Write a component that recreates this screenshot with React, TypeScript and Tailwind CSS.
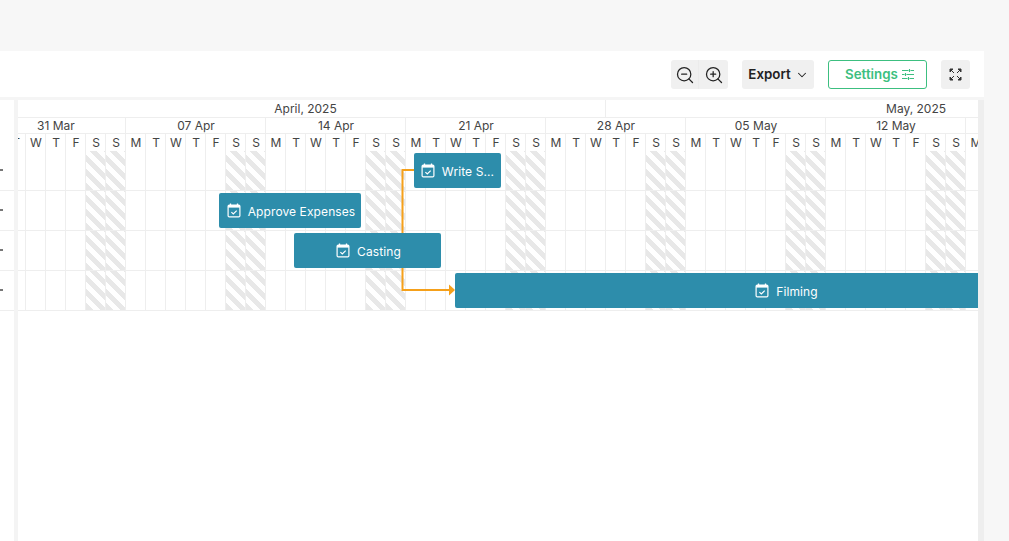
import React from "react";
import { ChevronDown, ZoomIn, ZoomOut } from "lucide-react";

const weeks = ["31 Mar", "07 Apr", "14 Apr", "21 Apr", "28 Apr", "05 May", "12 May", "19 May"];
const dayNames = ["M", "T", "W", "T", "F", "S", "S"];
const hatch =
  "bg-[repeating-linear-gradient(45deg,#e8e8e8_0px,#e8e8e8_5px,#ffffff_5px,#ffffff_10px)]";

function CalendarIcon() {
  return (
    <svg width="14" height="15" viewBox="0 0 14 15" fill="none" className="shrink-0">
      <path d="M3.500 0.500v2M10.500 0.500v2" stroke="white" strokeWidth="1.3" />
      <rect x="1.100" y="2" width="11.800" height="11.900" rx="1.200" stroke="white" strokeWidth="1.200" />
      <rect x="1.100" y="2" width="11.800" height="2.600" fill="white" />
      <path d="M4.400 9.100l1.900 1.900 3.400-3.400" stroke="white" strokeWidth="1.200" />
    </svg>
  );
}

function Bar({ className, label }: { className: string; label: string }) {
  return (
    <div
      className={`absolute flex h-[35px] items-center justify-center gap-[7px] rounded-[2px] bg-[#2d8dab] text-[12px] text-white ${className}`}
    >
      <CalendarIcon />
      <span className="pt-[2px] tracking-[0.1px]">{label}</span>
    </div>
  );
}

function Row() {
  return (
    <div className="flex h-10 border-b border-[#eeeeee]">
      {weeks.map((w) =>
        dayNames.map((d, i) => (
          <div
            key={w + i}
            className={`h-full w-5 shrink-0 border-r border-[#eeeeee] ${i >= 5 ? hatch : ""}`}
          />
        ))
      )}
    </div>
  );
}

export default function App() {
  return (
    <div className="h-[541px] w-[1009px] overflow-hidden bg-[#f7f7f7] pr-[25px] pt-[51px] font-['Inter','Liberation_Sans',sans-serif] text-[#444444]">
      <div className="flex h-[490px] flex-col bg-white">
        <div className="flex h-[46px] shrink-0 items-start justify-end gap-[14px] pr-[14px] pt-[9px]">
          <div className="flex h-[29px] w-[57px] rounded-[3px] bg-[#f0f0f0] text-[#222222]">
            <div className="flex w-[28px] items-center justify-center border-r border-[#ebebeb]">
              <ZoomOut size={20} strokeWidth={1.5} />
            </div>
            <div className="flex flex-1 items-center justify-center">
              <ZoomIn size={20} strokeWidth={1.5} />
            </div>
          </div>
          <div className="flex h-[29px] w-[72px] items-center justify-center gap-[4px] rounded-[3px] bg-[#f0f0f0] pl-[1px] text-[13.33px] font-semibold text-[#222222]">
            Export
            <ChevronDown size={14} strokeWidth={1.8} />
          </div>
          <div className="flex h-[29px] w-[99px] items-center justify-center gap-[4px] rounded-[3px] border border-[#3cbf80] pl-[4px] text-[13.33px] font-semibold text-[#3cbf80]">
            Settings
            <svg width="12" height="11" viewBox="0 0 12 11" fill="none" stroke="#3cbf80" strokeWidth="1.100">
              <path d="M0 1.500h6.500M8.500 1.500h3.500M0 5.500h2.500M4.500 5.500h7.500M0 9.500h5.500M7.500 9.500h4.500M7.500 0v3M3.500 4v3M6.500 8v3" />
            </svg>
          </div>
          <div className="flex h-[29px] w-[29px] items-center justify-center rounded-[3px] bg-[#f0f0f0]">
            <svg width="13" height="13" viewBox="0 0 13 13" fill="#333333" stroke="#333333" strokeWidth="1">
              <path d="M1 1h3L1 4zM1 1l4 4M12 1H9l3 3zM12 1L8 5M1 12h3l-3-3zM1 12l4-4M12 12H9l3-3zM12 12L8 8" />
            </svg>
          </div>
        </div>

        <div className="flex min-h-0 flex-1 flex-col border-t-[3px] border-[#f5f5f5]">
          <div className="flex min-h-0 flex-1">
            <div className="w-[14px] shrink-0 pt-[51px]">
              {[0, 1, 2, 3].map((i) => (
                <div key={i} className="flex h-10 items-center border-b border-[#eeeeee] pb-[1px]">
                  <div className="h-[2px] w-[3px] bg-[#777777]" />
                </div>
              ))}
            </div>
            <div className="w-[4px] shrink-0 bg-[#f4f4f4]" />
            <div className="relative min-w-0 flex-1 overflow-hidden">
              <div className="-ml-[32px] w-[1120px] text-[12px] leading-none">
                <div className="flex h-[18px] border-b border-[#eeeeee]">
                  <div className="flex w-[620px] shrink-0 items-center justify-center border-r border-[#eeeeee] pl-[20px]">
                    April, 2025
                  </div>
                  <div className="flex w-[500px] items-center justify-end pr-[160px]">May, 2025</div>
                </div>
                <div className="flex h-[16px] border-b border-[#eeeeee]">
                  {weeks.map((w) => (
                    <div key={w} className="flex w-[140px] shrink-0 items-center justify-center border-r border-[#eeeeee] pl-[1px]">
                      {w}
                    </div>
                  ))}
                </div>
                <div className="flex h-[17px]">
                  {weeks.map((w) =>
                    dayNames.map((d, i) => (
                      <div key={w + i} className="flex w-5 shrink-0 items-center justify-center border-r border-[#eeeeee] pl-[1px]">
                        {d}
                      </div>
                    ))
                  )}
                </div>
                <Row />
                <Row />
                <Row />
                <Row />
              </div>

              <svg className="absolute left-[380px] top-[60px]" width="60" height="140" viewBox="0 0 60 140" fill="none">
                <path d="M16 10H4.500V130H52" stroke="#f5a01a" strokeWidth="2" />
                <path d="M51 124.500L57 130L51 135.500Z" fill="#f5a01a" />
              </svg>

              <Bar className="left-[396px] top-[53px] w-[87px]" label="Write S..." />
              <Bar className="left-[201px] top-[93px] w-[142px] pl-[2px]" label="Approve Expenses" />
              <Bar className="left-[276px] top-[133px] w-[147px] pl-[2px]" label="Casting" />
              <Bar className="left-[437px] top-[173px] w-[660px] pl-[3px]" label="Filming" />
            </div>
            <div className="w-[6px] shrink-0 bg-[#eeeeee]" />
          </div>
        </div>
      </div>
    </div>
  );
}
